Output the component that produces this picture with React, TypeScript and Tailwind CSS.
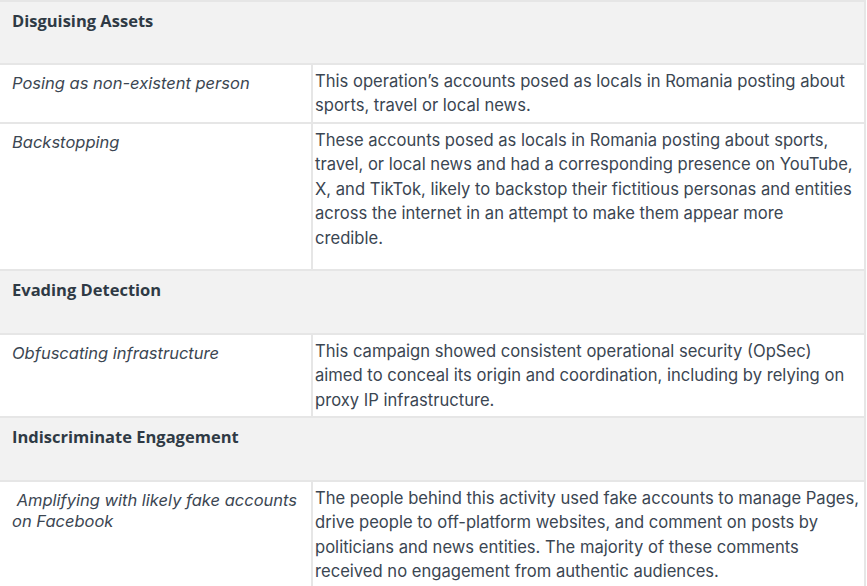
const rows: any[] = [
  { type: "head", title: "Disguising Assets", h: "h-[61px]" },
  {
    type: "row",
    label: ["Posing as non-existent person"],
    text: [
      "This operation\u2019s accounts posed as locals in Romania posting about",
      "sports, travel or local news.",
    ],
    h: "h-[57px]",
  },
  {
    type: "row",
    label: ["Backstopping"],
    text: [
      "These accounts posed as locals in Romania posting about sports,",
      "travel, or local news and had a corresponding presence on YouTube,",
      "X, and TikTok, likely to backstop their fictitious personas and entities",
      "across the internet in an attempt to make them appear more",
      "credible.",
    ],
    h: "h-[145px]",
  },
  { type: "head", title: "Evading Detection", h: "h-[62px]" },
  {
    type: "row",
    label: ["Obfuscating infrastructure"],
    text: [
      "This campaign showed consistent operational security (OpSec)",
      "aimed to conceal its origin and coordination, including by relying on",
      "proxy IP infrastructure.",
    ],
    h: "h-[81px]",
  },
  { type: "head", title: "Indiscriminate Engagement", h: "h-[62px]" },
  {
    type: "row",
    label: ["\u00a0Amplifying with likely fake accounts", "on Facebook"],
    text: [
      "The people behind this activity used fake accounts to manage Pages,",
      "drive people to off-platform websites, and comment on posts by",
      "politicians and news entities. The majority of these comments",
      "received no engagement from authentic audiences.",
    ],
    h: "h-[110px]",
  },
];

const App = () => {
  return (
    <div className="w-[867px] h-[586px] overflow-hidden bg-white">
      <table className="ml-[-2px] w-[868px] table-fixed border-separate border-spacing-[2px] bg-[#e6e6e6] text-[#3b4652] font-['Inter','Noto_Sans',sans-serif]">
        <colgroup>
          <col className="w-[311px]" />
          <col />
        </colgroup>
        <tbody>
          {rows.map((r, i) =>
            r.type === "head" ? (
              <tr key={i}>
                <td
                  colSpan={2}
                  className={`${r.h} bg-[#f2f2f2] align-top pl-[12px] pt-[7px] font-['Open_Sans',sans-serif] text-[16.5px] font-bold leading-[24px] text-[#2f3a45]`}
                >
                  {r.title}
                </td>
              </tr>
            ) : (
              <tr key={i}>
                <td className={`${r.h} bg-white align-top pl-[12px] pr-[8px] pt-[8px] text-[16.5px] italic leading-[21px]`}>
                  {r.label.map((l: string, j: number) => (
                    <div key={j}>{l}</div>
                  ))}
                </td>
                <td className={`${r.h} bg-white align-top pl-[2px] pt-[4px] text-[16.6px] leading-[24.4px] whitespace-nowrap`}>
                  {r.text.map((l: string, j: number) => (
                    <div key={j}>{l}</div>
                  ))}
                </td>
              </tr>
            )
          )}
        </tbody>
      </table>
    </div>
  );
};

export default App;
